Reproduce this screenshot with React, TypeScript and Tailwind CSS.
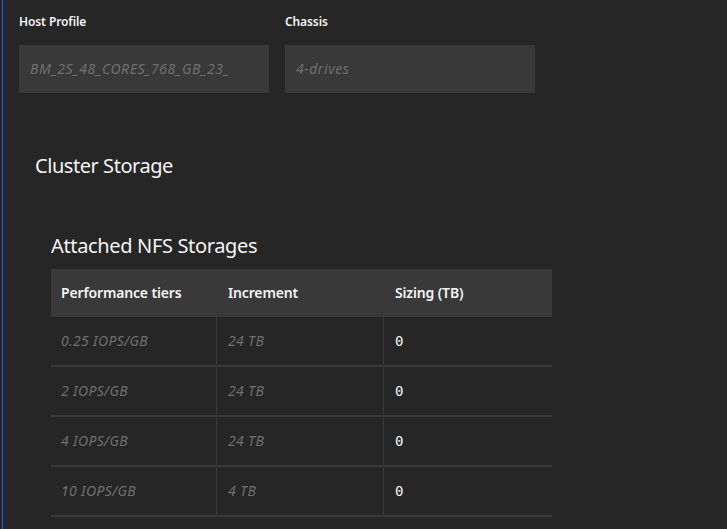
import React from "react";

const rows = [
  { tier: "0.25 IOPS/GB", inc: "24 TB", size: "0" },
  { tier: "2 IOPS/GB", inc: "24 TB", size: "0" },
  { tier: "4 IOPS/GB", inc: "24 TB", size: "0" },
  { tier: "10 IOPS/GB", inc: "4 TB", size: "0" },
];

function Field({ label, value }: { label: string; value: string }) {
  return (
    <div className="w-[250px]">
      <div className="text-[12px] leading-4 font-semibold text-[#f4f4f4] mb-[15px] tracking-[-0.1px]">{label}</div>
      <div className="h-12 bg-[#393939] px-[11px] pb-[1px] flex items-center italic text-[14px] tracking-[0.55px] text-[#6f6f6f] overflow-hidden whitespace-nowrap">
        {value}
      </div>
    </div>
  );
}

export default function App() {
  return (
    <div
      className="w-[727px] h-[529px] bg-[#262626] overflow-hidden"
      style={{ fontFamily: '"Noto Sans", sans-serif' }}
    >
      <div className="ml-[2px] h-full border-l border-[#0f62fe] pl-[16px] pt-[14px]">
        <div className="flex gap-[16px]">
          <Field label="Host Profile" value="BM_2S_48_CORES_768_GB_23_" />
          <Field label="Chassis" value="4-drives" />
        </div>
        <div className="pl-[16px]">
          <h2 className="mt-[59px] text-[20px] leading-7 tracking-[-0.45px] text-[#f4f4f4]">Cluster Storage</h2>
          <div className="pl-[16px]">
            <h3 className="mt-[52px] text-[20px] leading-7 tracking-[-0.35px] text-[#f4f4f4]">Attached NFS Storages</h3>
            <div className="mt-[9px] w-[501px]">
              <div className="grid grid-cols-[166px_167px_168px] h-12 bg-[#393939] text-[14px] font-semibold tracking-[-0.15px] text-[#f4f4f4]">
                <div className="flex items-center pl-[10px] pb-[2px]">Performance tiers</div>
                <div className="flex items-center pl-[11px] pb-[2px]">Increment</div>
                <div className="flex items-center pl-[11px] pb-[2px]">Sizing (TB)</div>
              </div>
              {rows.map((r) => (
                <div
                  key={r.tier}
                  className="grid grid-cols-[166px_167px_168px] h-[50px] border-b-2 border-[#393939] text-[14px]"
                >
                  <div className="flex items-center pl-[10px] pb-[2px] border-r border-[#393939] italic tracking-[0.35px] text-[#6f6f6f]">{r.tier}</div>
                  <div className="flex items-center pl-[11px] pb-[2px] border-r border-[#393939] italic tracking-[0.35px] text-[#6f6f6f]">{r.inc}</div>
                  <div
                    className="flex items-center pl-[11px] text-[#f4f4f4]"
                    style={{ fontFamily: '"DejaVu Sans Mono", monospace' }}
                  >
                    {r.size}
                  </div>
                </div>
              ))}
            </div>
          </div>
        </div>
      </div>
    </div>
  );
}
